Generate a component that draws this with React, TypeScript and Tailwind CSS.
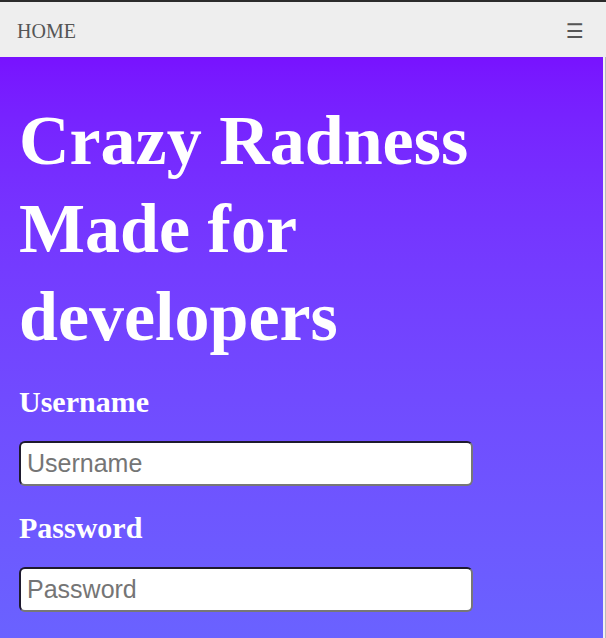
import React from 'react'

function Field({ label }: { label: string }) {
  return (
    <div className="flex flex-col">
      <label className="text-[30px] font-bold text-white leading-[34px] mb-[22px]">{label}</label>
      <input
        type={label === 'Password' ? 'password' : 'text'}
        placeholder={label}
        className="w-[454px] h-[45px] bg-white rounded-[6px] border-2 border-t-[#1e1a2e] border-l-[#1e1a2e] border-r-[#777] border-b-[#777] px-[6px] text-[25px] text-black placeholder:text-[#757575] outline-none font-['Liberation_Sans',Arial,sans-serif]"
      />
    </div>
  )
}

export default function App() {
  return (
    <div className="w-[606px] h-[638px] flex flex-col bg-[#2b2b2b] pt-[2px] overflow-hidden font-['Liberation_Serif','Times_New_Roman',serif]">
      <div className="flex flex-1 flex-col">
        <header className="h-[55px] shrink-0 bg-[#eeeeee] flex items-center justify-between pl-[17px] pr-[22px] pt-[2px]">
          <span className="text-[20px] text-[#555]">HOME</span>
          <span className="text-[20px] text-[#555] font-['DejaVu_Sans',sans-serif] leading-none">☰</span>
        </header>
        <div className="flex flex-1">
          <main className="flex-1 bg-gradient-to-b from-[#7812ff] to-[#6a62ff] pl-[19px] pt-[40px]">
            <h1 className="text-[70px] font-bold text-white leading-[88px] mb-[24px]">
              Crazy Radness
              <br />
              Made for
              <br />
              developers
            </h1>
            <div className="flex flex-col gap-[25px]">
              <Field label="Username" />
              <Field label="Password" />
            </div>
          </main>
          <div className="w-[3px] bg-[#f0f0f0] border-r border-[#bbb]" />
        </div>
      </div>
    </div>
  )
}
